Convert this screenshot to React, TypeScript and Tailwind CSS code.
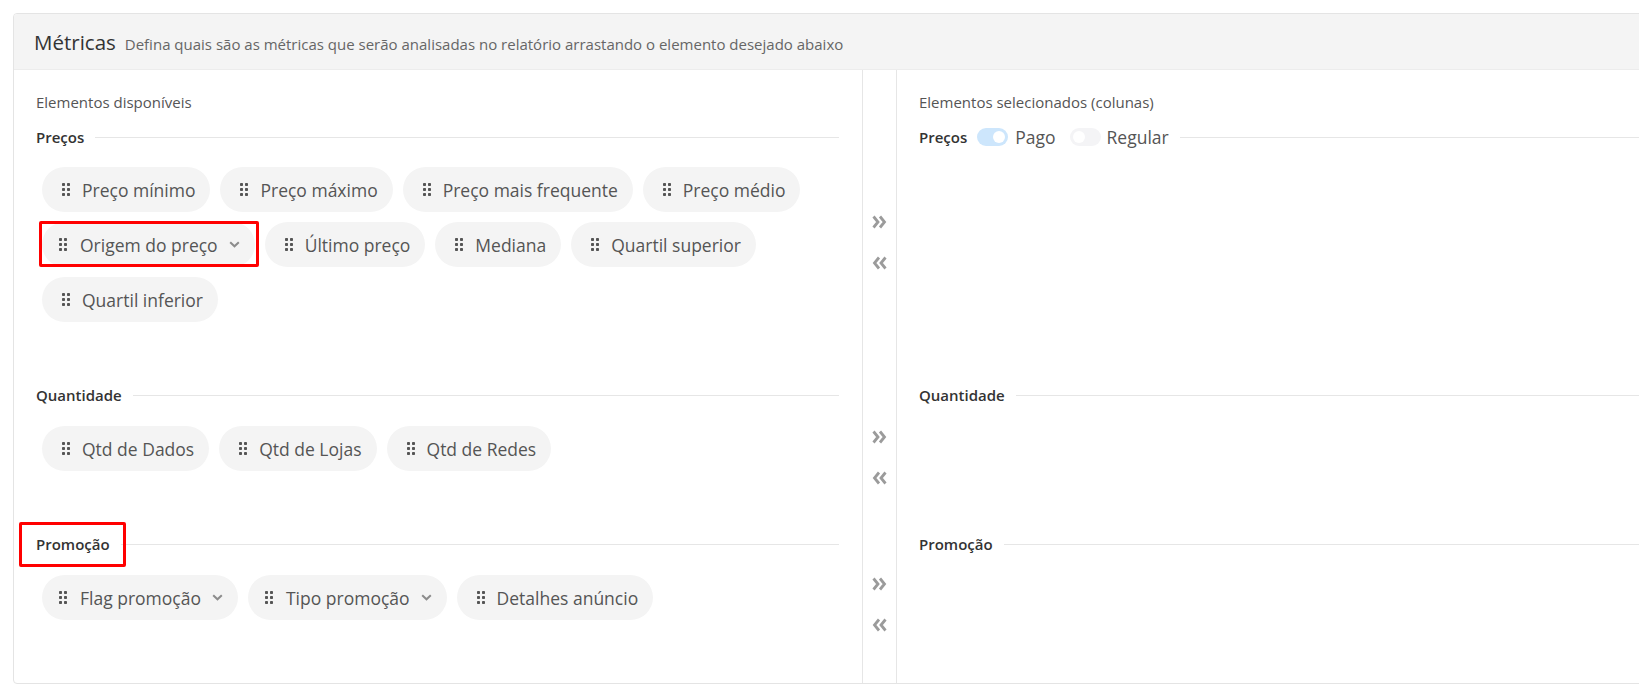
import React from "react";

function Handle() {
  return (
    <svg width="8" height="13" viewBox="0 0 8 13" className="shrink-0">
      {[0, 5, 10].map((y) => (
        <g key={y}>
          <rect x="0" y={y} width="3" height="3" rx="0.8" fill="#555" />
          <rect x="5" y={y} width="3" height="3" rx="0.8" fill="#555" />
        </g>
      ))}
    </svg>
  );
}

function Chevron() {
  return (
    <svg width="11" height="7" viewBox="0 0 11 7" className="shrink-0">
      <polyline points="1.2,1.2 5.5,5.3 9.8,1.2" fill="none" stroke="#8c8c8c" strokeWidth="2" />
    </svg>
  );
}

function Chip({ label, dropdown, highlight }: { label: string; dropdown?: boolean; highlight?: boolean }) {
  return (
    <div className="relative">
      <div
        className={
          dropdown
            ? "flex h-[45px] items-center rounded-full bg-[#f4f4f4] pl-[17px] pr-[15px] text-[17.5px] leading-[24px] text-[#555]"
            : "flex h-[45px] items-center rounded-full bg-[#f4f4f4] pl-5 pr-[15px] text-[17.5px] leading-[24px] text-[#555]"
        }
      >
        <Handle />
        <span className={dropdown ? "ml-[13px] whitespace-nowrap" : "ml-3 whitespace-nowrap"}>{label}</span>
        {dropdown && (
          <span className="ml-[11px] flex items-center">
            <Chevron />
          </span>
        )}
      </div>
      {highlight && (
        <div className="pointer-events-none absolute -left-[3px] -right-[4px] -top-[1px] bottom-0 rounded-[2px] border-[3px] border-[#ff0000]" />
      )}
    </div>
  );
}

function Heading({ title, highlight, children }: { title: string; highlight?: boolean; children?: React.ReactNode }) {
  return (
    <div className="flex h-5 items-center">
      <span className="relative text-[15px] font-semibold leading-5 text-[#333]">
        {title}
        {highlight && (
          <span className="pointer-events-none absolute -left-[17px] -top-[12px] h-[45px] w-[107px] rounded-[2px] border-[3px] border-[#ff0000]" />
        )}
      </span>
      {children}
      <div className="ml-[11px] h-px flex-1 bg-[#e6e6e6]" />
    </div>
  );
}

function Arrows() {
  return (
    <div className="flex flex-col items-center gap-[21px]">
      <svg width="15" height="20" viewBox="0 0 15 20">
        <polyline points="1.5,4.5 6,10 1.5,15.5" fill="none" stroke="#9b9b9b" strokeWidth="2.8" />
        <polyline points="8,4.5 12.5,10 8,15.5" fill="none" stroke="#9b9b9b" strokeWidth="2.8" />
      </svg>
      <svg width="15" height="20" viewBox="0 0 15 20">
        <polyline points="7,4.5 2.5,10 7,15.5" fill="none" stroke="#9b9b9b" strokeWidth="2.8" />
        <polyline points="13.5,4.5 9,10 13.5,15.5" fill="none" stroke="#9b9b9b" strokeWidth="2.8" />
      </svg>
    </div>
  );
}

function Toggle({ on }: { on?: boolean }) {
  return (
    <div
      className={
        on
          ? "flex h-[18px] w-[31px] items-center justify-end rounded-full bg-[#cde6fc] pr-[3px]"
          : "flex h-[18px] w-[31px] items-center justify-start rounded-full bg-[#f4f4f6] pl-[3px]"
      }
    >
      <div className="h-[12px] w-[12px] rounded-full bg-white" />
    </div>
  );
}

export default function App() {
  return (
    <div className="h-[697px] w-full overflow-hidden bg-white" style={{ fontFamily: '"Open Sans", "Noto Sans", sans-serif' }}>
      <div className="ml-[13px] mt-[13px] w-[1640px] overflow-hidden rounded-[4px] border border-[#e4e4e4]">
        <div className="box-border flex h-[56px] items-baseline border-b border-[#ececec] bg-[#f4f4f4] pl-5 pt-[14px]">
          <span className="text-[20.5px] leading-[28px] text-[#333]">Métricas</span>
          <span className="ml-[9px] text-[15px] text-[#666]">
            Defina quais são as métricas que serão analisadas no relatório arrastando o elemento desejado abaixo
          </span>
        </div>
        <div className="grid grid-cols-[848px_35px_1fr]">
          {/* Row 1 */}
          <div className="h-[315px] pl-[22px] pr-[23px] pt-[23px]">
            <div className="text-[15px] leading-[18px] text-[#555]">Elementos disponíveis</div>
            <div className="mt-[16px]">
              <Heading title="Preços" />
            </div>
            <div className="mt-[20px] flex flex-wrap gap-[10px] pl-[6px]">
              <Chip label="Preço mínimo" />
              <Chip label="Preço máximo" />
              <Chip label="Preço mais frequente" />
              <Chip label="Preço médio" />
              <Chip label="Origem do preço" dropdown highlight />
              <Chip label="Último preço" />
              <Chip label="Mediana" />
              <Chip label="Quartil superior" />
              <Chip label="Quartil inferior" />
            </div>
          </div>
          <div className="flex h-[315px] justify-center border-x border-[#e6e6e6] pt-[142px]">
            <Arrows />
          </div>
          <div className="h-[315px] pl-[22px] pt-[23px]">
            <div className="text-[15px] leading-[18px] text-[#555]">Elementos selecionados (colunas)</div>
            <div className="mt-[16px]">
              <Heading title="Preços">
                <div className="ml-[10px] flex items-center">
                  <Toggle on />
                  <span className="ml-[7px] text-[17.5px] leading-5 text-[#555]">Pago</span>
                  <span className="ml-[14px]">
                    <Toggle />
                  </span>
                  <span className="ml-[6px] text-[17.5px] leading-5 text-[#555]">Regular</span>
                </div>
              </Heading>
            </div>
          </div>

          {/* Row 2 */}
          <div className="h-[149px] pl-[22px] pr-[23px]">
            <Heading title="Quantidade" />
            <div className="mt-[21px] flex flex-wrap gap-[10px] pl-[6px]">
              <Chip label="Qtd de Dados" />
              <Chip label="Qtd de Lojas" />
              <Chip label="Qtd de Redes" />
            </div>
          </div>
          <div className="flex h-[149px] justify-center border-x border-[#e6e6e6] pt-[42px]">
            <Arrows />
          </div>
          <div className="h-[149px] pl-[22px]">
            <Heading title="Quantidade" />
          </div>

          {/* Row 3 */}
          <div className="h-[149px] pl-[22px] pr-[23px]">
            <Heading title="Promoção" highlight />
            <div className="mt-[21px] flex flex-wrap gap-[10px] pl-[6px]">
              <Chip label="Flag promoção" dropdown />
              <Chip label="Tipo promoção" dropdown />
              <Chip label="Detalhes anúncio" />
            </div>
          </div>
          <div className="flex h-[149px] justify-center border-x border-[#e6e6e6] pt-[40px]">
            <Arrows />
          </div>
          <div className="h-[149px] pl-[22px]">
            <Heading title="Promoção" />
          </div>
        </div>
      </div>
    </div>
  );
}
